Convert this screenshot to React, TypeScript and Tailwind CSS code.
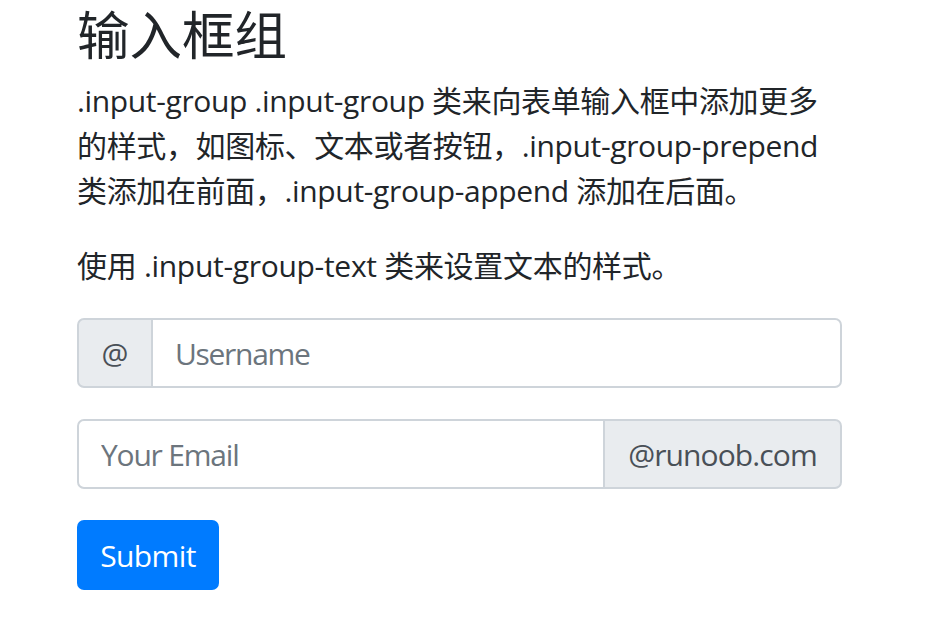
import React from "react";

const FONT = "font-['Open_Sans','Noto_Sans_CJK_SC',sans-serif]";

export default function App() {
  return (
    <div className={`w-[942px] h-[622px] bg-white text-[#212529] ${FONT} pl-[77px] overflow-hidden`}>
      <div className="w-[765px]">
        <h3 className="text-[52.5px] leading-[63px] font-normal mt-[3px] mb-[12px]">输入框组</h3>
        <p className="text-[30px] leading-[45px] mb-[30px] tracking-[-0.35px]">
          .input-group .input-group 类来向表单输入框中添加更多<br />
          的样式，如图标、文本或者按钮，.input-group-prepend<br />
          类添加在前面，.input-group-append 添加在后面。
        </p>
        <p className="text-[30px] leading-[45px] mb-[30px] tracking-[-0.3px]">使用 .input-group-text 类来设置文本的样式。</p>
        <form onSubmit={(e) => e.preventDefault()}>
          <div className="flex h-[70px] mb-[31px]">
            <span className="flex items-center justify-center w-[76px] shrink-0 bg-[#e9ecef] border-2 border-[#ced4da] rounded-l-[7px] text-[30px] text-[#495057]">
              @
            </span>
            <input
              type="text"
              placeholder="Username"
              className="flex-1 min-w-0 border-2 border-l-0 border-[#ced4da] rounded-r-[7px] px-[22px] text-[30px] tracking-[-1.3px] text-[#495057] placeholder:text-[#6c757d] outline-none bg-white"
            />
          </div>
          <div className="flex h-[70px] mb-[31px]">
            <input
              type="text"
              placeholder="Your Email"
              className="flex-1 min-w-0 border-2 border-[#ced4da] rounded-l-[7px] px-[22px] text-[30px] tracking-[-1.2px] text-[#495057] placeholder:text-[#6c757d] outline-none bg-white"
            />
            <span className="flex items-center justify-center w-[237px] shrink-0 bg-[#e9ecef] border-2 border-l-0 border-[#ced4da] rounded-r-[7px] text-[30px] tracking-[-0.9px] text-[#495057]">
              @runoob.com
            </span>
          </div>
          <button
            type="submit"
            className="h-[70px] w-[142px] bg-[#007bff] text-white text-[30px] tracking-[-0.6px] rounded-[7px]"
          >
            Submit
          </button>
        </form>
      </div>
    </div>
  );
}
